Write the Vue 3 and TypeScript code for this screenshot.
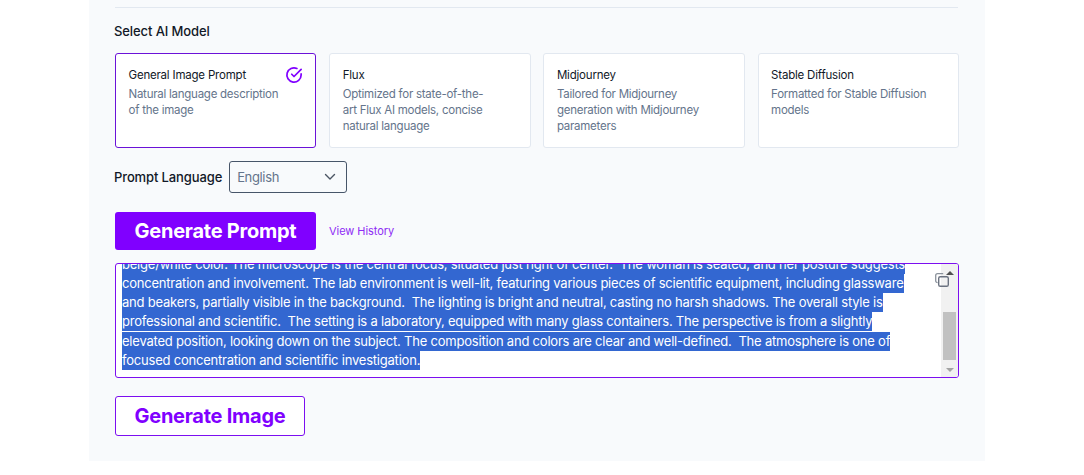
<script setup lang="ts">
interface Model { name: string; desc: string; active?: boolean }
const models: Model[] = [
  { name: 'General Image Prompt', desc: 'Natural language description of the image', active: true },
  { name: 'Flux', desc: 'Optimized for state-of-the-\nart Flux AI models, concise natural language' },
  { name: 'Midjourney', desc: 'Tailored for Midjourney generation with Midjourney parameters' },
  { name: 'Stable Diffusion', desc: 'Formatted for Stable Diffusion models' },
]
const lines: string[] = [
  'beige/white color. The microscope is the central focus, situated just right of center.  The woman is seated, and her posture suggests',
  'concentration and involvement. The lab environment is well-lit, featuring various pieces of scientific equipment, including glassware',
  'and beakers, partially visible in the background.  The lighting is bright and neutral, casting no harsh shadows. The overall style is',
  'professional and scientific.  The setting is a laboratory, equipped with many glass containers. The perspective is from a slightly',
  'elevated position, looking down on the subject. The composition and colors are clear and well-defined.  The atmosphere is one of',
  'focused concentration and scientific investigation.',
]
</script>

<template>
  <div class="page">
    <main class="panel">
      <hr class="rule" />
      <h2 class="heading">Select AI Model</h2>
      <div class="cards">
        <div v-for="m in models" :key="m.name" class="card" :class="{ active: m.active }">
          <div class="card-name">{{ m.name }}</div>
          <div class="card-desc">{{ m.desc }}</div>
          <svg v-if="m.active" class="check" width="18" height="18" viewBox="0 0 24 24" fill="none" stroke="#8000ff" stroke-width="2.3" stroke-linecap="round" stroke-linejoin="round">
            <path d="M21.5 10.5V12a9.5 9.5 0 1 1-5.6-8.7" />
            <path d="M21.5 4.5 12 14l-3-3" />
          </svg>
        </div>
      </div>
      <div class="lang-row">
        <span class="lang-label">Prompt Language</span>
        <div class="select">
          <span>English</span>
          <svg width="12" height="8" viewBox="0 0 12 8" fill="none" stroke="#4b5563" stroke-width="1.4" stroke-linecap="round" stroke-linejoin="round"><path d="M1.5 1.5 6 6l4.5-4.5" /></svg>
        </div>
      </div>
      <div class="action-row">
        <button class="btn-primary" type="button">Generate Prompt</button>
        <a class="history">View History</a>
      </div>
      <div class="output">
        <div class="text">
          <div v-for="(l, i) in lines" :key="i" class="line" :class="{ gap: i === 4 }"><span>{{ l }}</span></div>
        </div>
        <div class="scrollbar">
          <span class="arrow up"></span>
          <div class="track"><div class="thumb"></div></div>
          <span class="arrow down"></span>
        </div>
        <svg class="copy" width="14" height="14" viewBox="0 0 14 14" fill="none">
          <path d="M2.6 9.6A1.9 1.9 0 0 1 .7 7.7V2.6A1.9 1.9 0 0 1 2.6.7h5.6" stroke="#8b929c" stroke-width="1.3" />
          <rect x="3.7" y="3.7" width="9.6" height="9.6" rx="1.6" stroke="#6b7280" stroke-width="1.4" />
        </svg>
      </div>
      <button class="btn-outline" type="button">Generate Image</button>
    </main>
  </div>
</template>

<style>
html, body { margin: 0; background: #fff; }
</style>

<style scoped>
.page {
  width: 1084px;
  height: 475px;
  overflow: hidden;
  font-family: Inter, "Noto Sans", sans-serif;
  color: #111827;
}
.panel {
  box-sizing: border-box;
  width: 896px;
  height: 461px;
  margin-left: 89px;
  padding: 7px 26px 0;
  background: #f8fafc;
  display: flex;
  flex-direction: column;
  align-items: flex-start;
}
.rule {
  width: 843px;
  margin: 0;
  border: 0;
  border-top: 1px solid #e2e8f0;
}
.heading {
  margin: 15px 0 0 -1px;
  font-size: 13px;
  line-height: 17px;
  font-weight: 550;
  letter-spacing: -0.1px;
}
.cards {
  margin-top: 13px;
  width: 844px;
  display: grid;
  grid-template-columns: repeat(4, 1fr);
  gap: 12.8px;
}
.card {
  position: relative;
  box-sizing: border-box;
  height: 95px;
  padding: 13px 12.5px;
  background: #fff;
  border: 1px solid #e2e8f0;
  border-radius: 3px;
}
.card.active { border-color: #6b12d8; }
.card-name {
  font-size: 11.5px;
  line-height: 16px;
  letter-spacing: -0.2px;
  color: #111827;
}
.card-desc {
  margin-top: 3px;
  max-width: 160px;
  font-size: 11.5px;
  line-height: 16px;
  letter-spacing: -0.25px;
  color: #64748b;
  white-space: pre-line;
}
.check { position: absolute; top: 12px; right: 12.5px; }
.lang-row {
  margin: 13px 0 0 -1px;
  display: flex;
  align-items: center;
  gap: 7px;
}
.lang-label { font-size: 13px; font-weight: 550; letter-spacing: -0.12px; }
.select {
  box-sizing: border-box;
  width: 118px;
  height: 32px;
  padding: 0 10px 0 7px;
  display: flex;
  align-items: center;
  justify-content: space-between;
  border: 1px solid #475569;
  border-radius: 3px;
  font-size: 13px;
  letter-spacing: -0.35px;
  color: #64748b;
}
.action-row {
  margin-top: 19px;
  display: flex;
  align-items: center;
  gap: 13px;
}
.btn-primary, .btn-outline {
  box-sizing: border-box;
  font-family: inherit;
  font-weight: 700;
  border-radius: 3px;
  cursor: pointer;
}
.btn-primary {
  width: 201px;
  height: 38px;
  padding: 0;
  border: 0;
  background: #8000ff;
  color: #fff;
  font-size: 20px;
  letter-spacing: -0.25px;
}
.history { font-size: 11px; letter-spacing: -0.05px; color: #8f2cf5; }
.output {
  position: relative;
  box-sizing: border-box;
  margin-top: 13px;
  width: 844px;
  height: 115px;
  background: #fff;
  border: 1px solid #7c0ef0;
  border-radius: 3px;
  overflow: hidden;
  display: flex;
  justify-content: space-between;
}
.text {
  flex: 1;
  display: flex;
  flex-direction: column;
  justify-content: flex-end;
  padding: 0 0 7px 6px;
  font-size: 13px;
  letter-spacing: -0.215px;
  color: #fff;
}
.line { height: 19px; line-height: 19px; white-space: pre; }
.line.gap { margin-top: 1px; }
.line span { display: inline-block; background: #3367d1; }
.copy { position: absolute; top: 9px; right: 9px; }
.scrollbar {
  flex: none;
  width: 17px;
  background: #f1f1f1;
  display: flex;
  flex-direction: column;
  align-items: center;
}
.arrow {
  flex: none;
  width: 0;
  height: 0;
  margin: 5px 0;
  border-left: 4px solid transparent;
  border-right: 4px solid transparent;
}
.arrow.up { border-bottom: 4px solid #505050; margin-top: 7px; }
.arrow.down { border-top: 4px solid #a3a3a3; }
.track { flex: 1; width: 100%; display: flex; align-items: flex-end; justify-content: center; }
.thumb { width: 13px; height: 48px; margin-bottom: 3px; background: #c1c1c1; }
.btn-outline {
  margin-top: 18px;
  width: 190px;
  height: 40px;
  padding: 0;
  background: #fff;
  border: 1px solid #7c0ef0;
  color: #8000ff;
  font-size: 20px;
  letter-spacing: -0.25px;
}
</style>
